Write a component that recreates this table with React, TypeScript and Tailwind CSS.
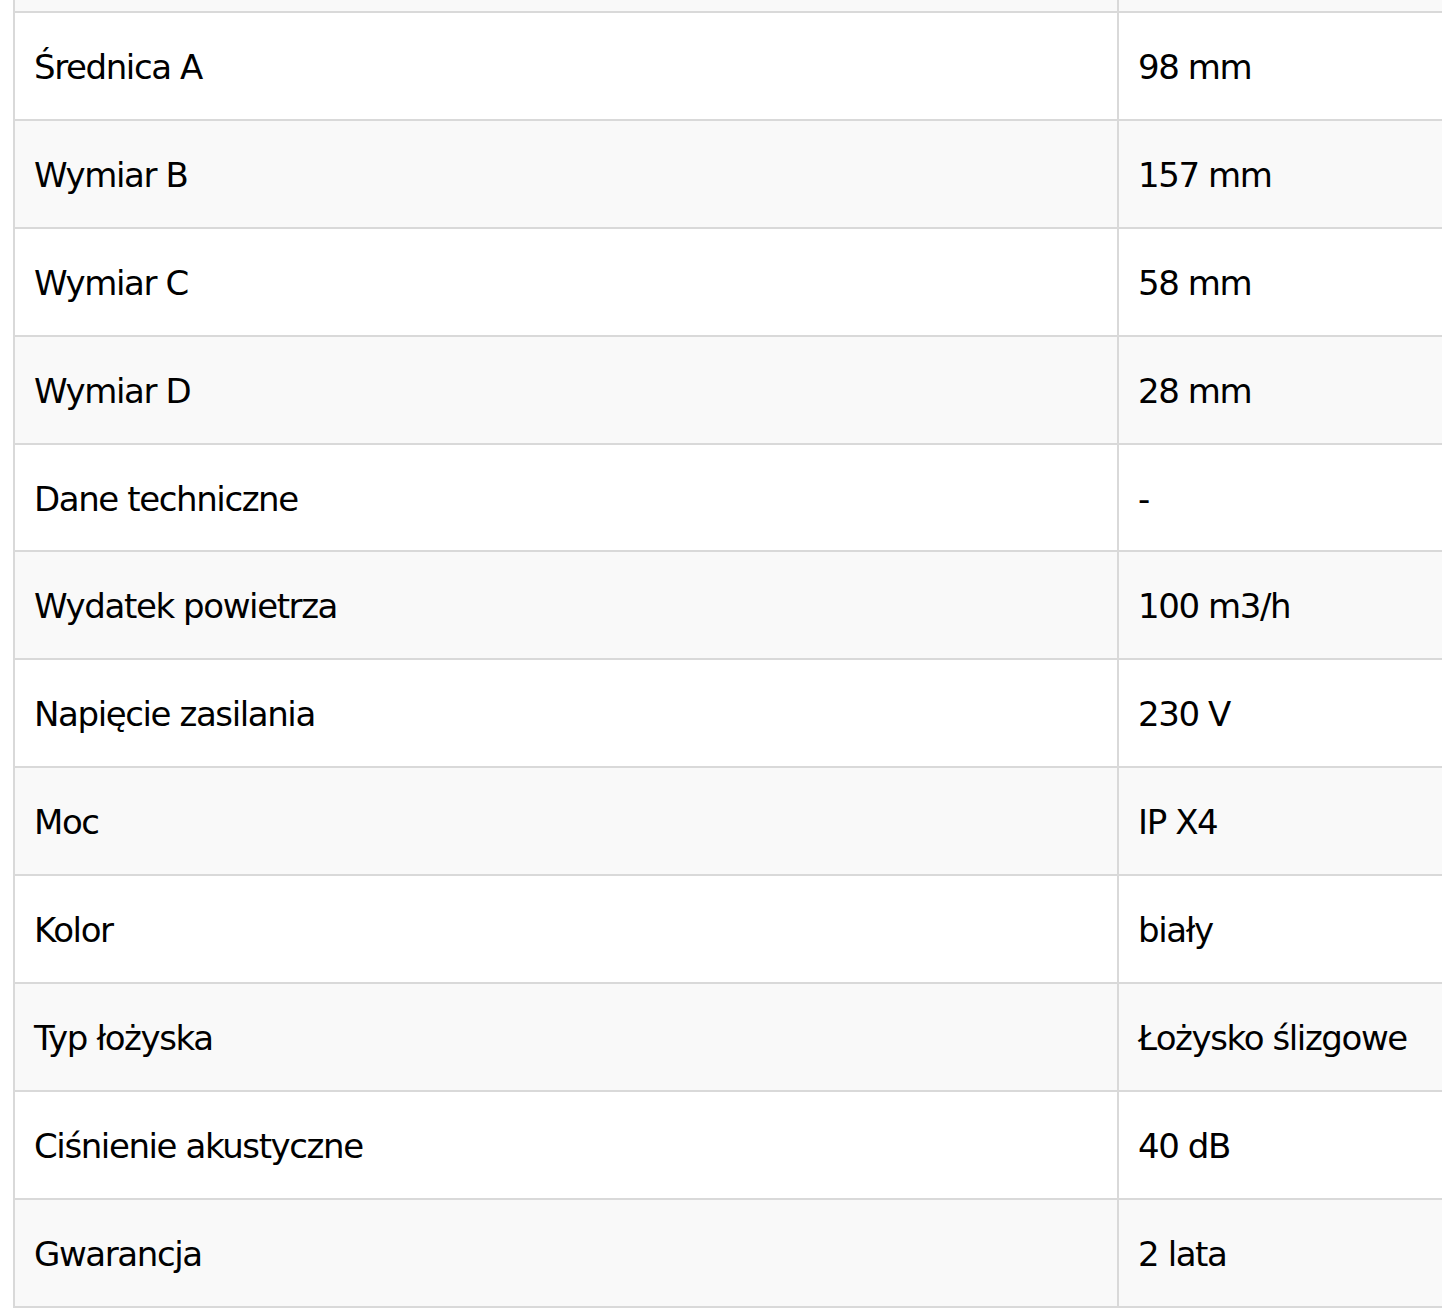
import React from "react";

const rows: [string, string][] = [
  ["Średnica A", "98 mm"],
  ["Wymiar B", "157 mm"],
  ["Wymiar C", "58 mm"],
  ["Wymiar D", "28 mm"],
  ["Dane techniczne", "-"],
  ["Wydatek powietrza", "100 m3/h"],
  ["Napięcie zasilania", "230 V"],
  ["Moc", "IP X4"],
  ["Kolor", "biały"],
  ["Typ łożyska", "Łożysko ślizgowe"],
  ["Ciśnienie akustyczne", "40 dB"],
  ["Gwarancja", "2 lata"],
];

export default function App() {
  return (
    <div
      className="w-[1442px] h-[1314px] overflow-hidden bg-white text-black"
      style={{ fontFamily: '"DejaVu Sans", Tahoma, sans-serif' }}
    >
      <div className="ml-[13px] w-[1480px]">
        <div className="grid grid-cols-[1104px_1fr] h-[11px]">
          <div className="border-l-2 border-[#d9d9d9] bg-[#f9f9f9]" />
          <div className="border-l-2 border-[#d9d9d9] bg-[#f9f9f9]" />
        </div>
        {rows.map(([k, v], i) => (
          <div
            key={k}
            className={`grid grid-cols-[1104px_1fr] border-t-2 border-[#d9d9d9] ${
              i === rows.length - 1 ? "border-b-2" : ""
            } ${i % 2 === 0 ? "bg-white" : "bg-[#f9f9f9]"}`}
          >
            <div className="border-l-2 border-[#d9d9d9] h-[105.9px] flex items-center pl-[19px] pt-[3px] text-[34px] tracking-[-1.4px]">
              {k}
            </div>
            <div className="border-l-2 border-[#d9d9d9] h-[105.9px] flex items-center pl-[19px] pt-[3px] text-[34px] tracking-[-1.4px]">
              {v}
            </div>
          </div>
        ))}
      </div>
    </div>
  );
}
